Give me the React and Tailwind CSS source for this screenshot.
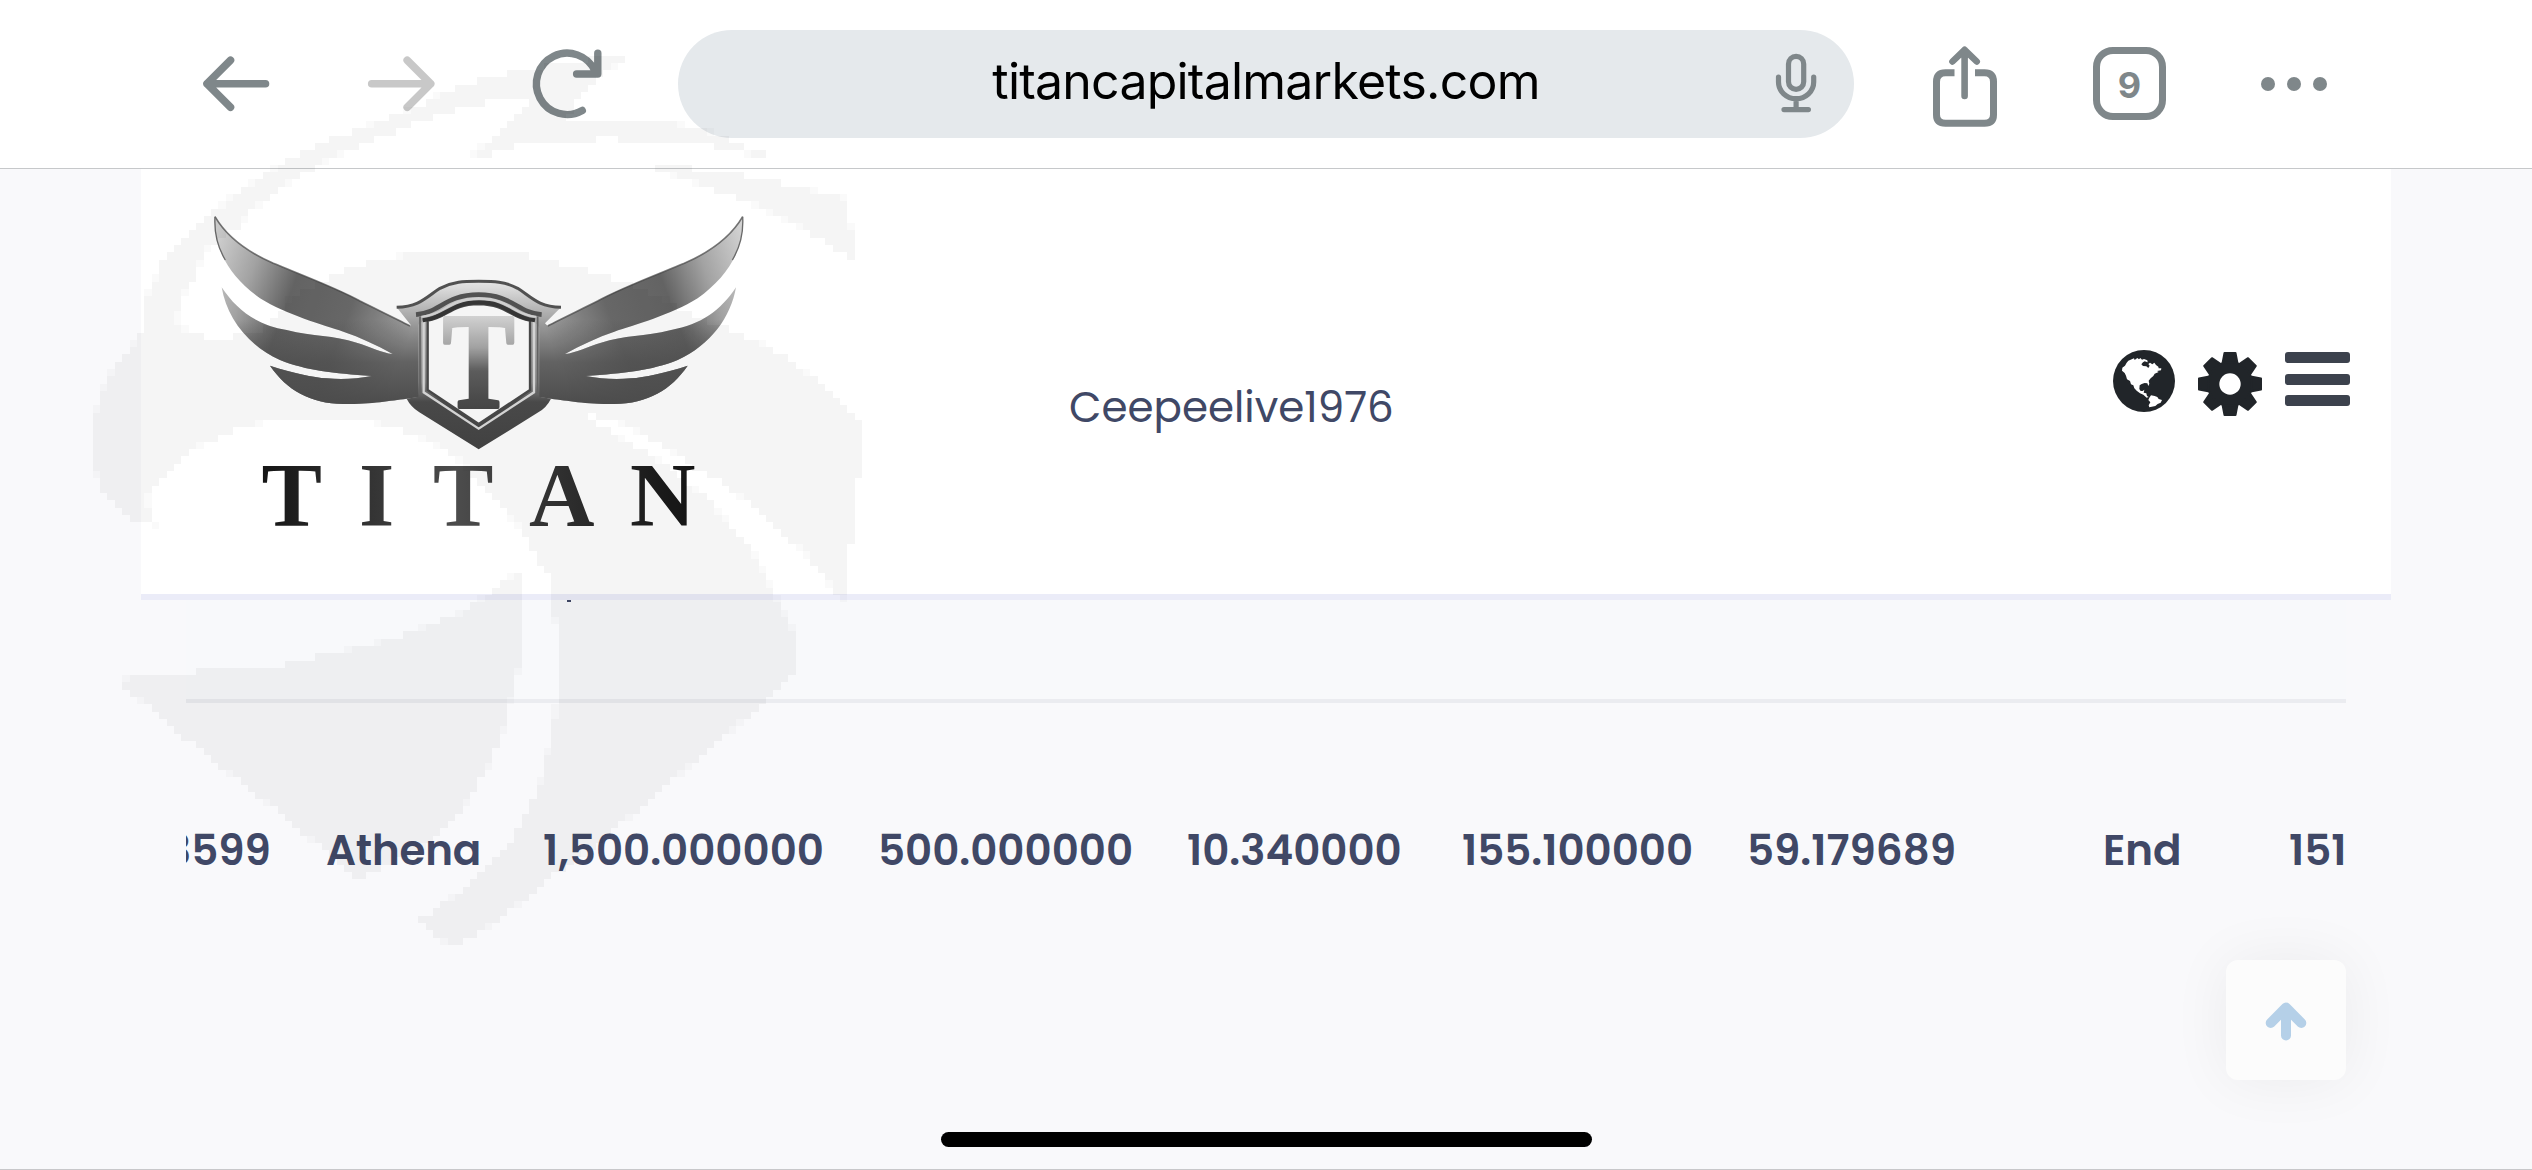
import React from 'react';

/* block grid of the watermark */
const CELL_W = 7.4;
const CELL_H = 7.29;
const START_X = 3.8;
const START_Y = 4.5;

/* WATERMARK SHAPES, points as [x, y] pairs on a 1568 x 1568 grid */
const WATERMARK = [
  [
    [1052, 42], [960, 50], [850, 68], [780, 82], [700, 102], [640, 130], [560, 158], [480, 184], [400, 216], [350, 245],
    [290, 280], [250, 310], [200, 350], [160, 385], [140, 425], [120, 465], [118, 512], [90, 540], [60, 575], [40, 615],
    [22, 660], [22, 725], [35, 765], [65, 800], [110, 832], [145, 836], [132, 810], [132, 785], [170, 745], [220, 705],
    [280, 680], [350, 662], [420, 656], [530, 656], [600, 670], [660, 690], [720, 720], [755, 755], [800, 800], [855, 855],
    [870, 890], [900, 925], [905, 980], [915, 1020], [915, 1100], [905, 1170], [890, 1230], [870, 1290], [830, 1360], [790, 1400],
    [740, 1440], [690, 1478], [650, 1500], [670, 1522], [710, 1545], [770, 1518], [830, 1480], [900, 1430], [970, 1385], [1060, 1320],
    [1160, 1245], [1300, 1140], [1374, 1075], [1372, 1035], [1350, 985], [1325, 945], [1290, 885], [1250, 840], [1200, 790], [1130, 740],
    [1080, 710], [1010, 675], [960, 646], [1040, 665], [1110, 698], [1175, 740], [1225, 760], [1300, 815], [1390, 885], [1450, 955],
    [1460, 966], [1473, 870], [1486, 845], [1486, 760], [1498, 735], [1498, 660], [1450, 625], [1400, 585], [1340, 545], [1280, 518],
    [1210, 495], [1120, 455], [1040, 425], [990, 410], [930, 395], [850, 380], [740, 373], [640, 377], [560, 388], [480, 415],
    [400, 455], [340, 510], [260, 521], [205, 508], [187, 490], [190, 460], [210, 430], [225, 405], [245, 365], [300, 335],
    [330, 302], [400, 258], [460, 225], [530, 197], [620, 165], [720, 135], [790, 118], [860, 110], [850, 130], [810, 165],
    [775, 190], [750, 210], [790, 210], [860, 187], [1010, 184], [1150, 187], [1210, 197], [1280, 210], [1320, 210], [1250, 190],
    [1190, 165], [1110, 155], [1040, 148], [930, 150], [950, 120], [1000, 75]
  ],
  [
    [1068, 226], [1120, 229], [1210, 238], [1300, 250], [1380, 268], [1450, 275], [1472, 290], [1472, 330], [1486, 345], [1486, 386],
    [1460, 380], [1420, 355], [1360, 325], [1290, 295], [1220, 272], [1150, 250]
  ],
  [
    [835, 915], [846, 930], [846, 1060], [830, 1110], [810, 1180], [785, 1235], [750, 1290], [700, 1345], [640, 1385], [560, 1420],
    [530, 1434], [500, 1410], [450, 1370], [380, 1320], [300, 1265], [240, 1220], [180, 1180], [130, 1140], [76, 1102], [95, 1090],
    [270, 1078], [380, 1072], [460, 1055], [560, 1035], [640, 1013], [720, 985], [780, 950]
  ]
];

const block = (from, to, row) => {
  const x1 = (START_X + from * CELL_W).toFixed(1);
  const x2 = (START_X + to * CELL_W).toFixed(1);
  const y1 = Math.round(START_Y + row * CELL_H);
  const y2 = Math.round(START_Y + (row + 1) * CELL_H);
  return `M${x1} ${y1}H${x2}V${y2}H${x1}z`;
};

/* turns a shape into runs of full blocks, with lighter blocks on the edges */
const toBlocks = (points) => {
  const px = points.map(([x, y]) => [80 + x / 1.912, 30 + y / 1.686]);
  let full = '';
  let edge = '';
  for (let row = 0; row < 140; row++) {
    const y = START_Y + (row + 0.5) * CELL_H;
    const hits = [];
    px.forEach(([x1, y1], i) => {
      const [x2, y2] = px[(i + 1) % px.length];
      if (y1 > y !== y2 > y) hits.push(x1 + ((y - y1) * (x2 - x1)) / (y2 - y1));
    });
    hits.sort((a, b) => a - b);
    for (let i = 0; i + 1 < hits.length; i += 2) {
      const left = (hits[i] - START_X) / CELL_W;
      const right = (hits[i + 1] - START_X) / CELL_W;
      const from = Math.ceil(left - 0.35);
      const to = Math.floor(right + 0.35);
      if (to > from) full += block(from, to, row);
      if (from - left > 0.4) edge += block(from - 1, from, row);
      if (right - to > 0.4 && to >= from) edge += block(to, to + 1, row);
    }
  }
  return { full, edge };
};

const BLOCKS = WATERMARK.map(toBlocks);

const Watermark = () => (
  <svg
    className="absolute left-0 top-0 pointer-events-none"
    width="900"
    height="1000"
    viewBox="0 0 900 1000"
    shapeRendering="crispEdges"
  >
    <path d={BLOCKS.map((b) => b.full).join('')} fill="#000" fillOpacity="0.04" />
    <path d={BLOCKS.map((b) => b.edge).join('')} fill="#000" fillOpacity="0.02" />
  </svg>
);

const Toolbar = () => (
  <div className="h-[169px] shrink-0 bg-white border-b border-[#c6c8ca] flex items-start">
    <svg className="ml-[200px] mt-[44px]" width="70" height="80" viewBox="200 44 70 80" fill="none" stroke="#7f878a" strokeWidth="7.6" strokeLinecap="round" strokeLinejoin="round">
      <path d="M230.5 60.3 207 83.7l23.5 23.5M207 83.7h58.5" />
    </svg>
    <svg className="ml-[96px] mt-[44px]" width="74" height="80" viewBox="366 44 74 80" fill="none" stroke="#c8c8c8" strokeWidth="7.6" strokeLinecap="round" strokeLinejoin="round">
      <path d="M407.2 60.3 430.7 83.7l-23.5 23.5M430.7 83.7h-59" />
    </svg>
    <svg className="ml-[88px] mt-[44px]" width="80" height="80" viewBox="528 44 80 80" fill="none" stroke="#7f878a" strokeWidth="7.4" strokeLinecap="round" strokeLinejoin="round">
      <path d="M582.3 110.5A30.7 30.7 0 1 1 595 71M597.8 53.3V74h-21.2" />
    </svg>

    <div className="ml-[70px] mt-[30px] w-[1176px] h-[108px] rounded-full bg-[#e5e9ec] relative flex items-center justify-center">
      <span className="font-['Inter'] text-[50px] leading-[60px] tracking-[-0.78px] text-black whitespace-nowrap relative -top-[3px]">
        titancapitalmarkets.com
      </span>
      <svg className="absolute right-[36px] top-[20px]" width="44" height="66" viewBox="1774 50 44 66" fill="none" stroke="#7f878a" strokeWidth="5.2" strokeLinecap="round">
        <rect x="1788.5" y="56.3" width="15.2" height="33" rx="7.6" />
        <path d="M1778.5 77v5a17.6 16.7 0 0 0 35.2 0v-5M1796.1 99v10M1784 109.6h24.4" />
      </svg>
    </div>

    <svg className="ml-[74px] mt-[40px]" width="74" height="92" viewBox="1928 40 74 92" fill="none" stroke="#7f878a" strokeWidth="7" strokeLinecap="round" strokeLinejoin="round">
      <path strokeLinecap="butt" d="M1954.5 72.8h-9q-9 0-9 9v33q0 8.500 9 8.500h39q9 0 9-8.500v-33q0-9-9-9h-9.500" />
      <path strokeWidth="6.6" d="M1964.6 50v46M1952.5 61.5l12.1-11.7 12.1 11.7" />
    </svg>

    <div className="ml-[91px] mt-[47px] w-[73px] h-[73px] rounded-[20px] border-[7px] border-[#7f878a] flex items-center justify-center font-['Inter'] text-[36px] leading-none font-bold text-[#7f878a]">
      <span className="relative top-[1px]">9</span>
    </div>

    <div className="ml-[95px] mt-[77px] flex gap-[12px]">
      <div className="size-[14px] rounded-full bg-[#7f878a]" />
      <div className="size-[14px] rounded-full bg-[#7f878a]" />
      <div className="size-[14px] rounded-full bg-[#7f878a]" />
    </div>
  </div>
);

const WING =
  'M45 48C80 110 140 155 220 190C330 235 410 265 480 303C540 333 590 357 630 378L662 345V590L620 596C570 602 520 612 430 612C330 610 260 570 210 497C280 520 340 532 380 535C430 540 470 536 515 528C400 520 320 512 240 480C140 435 80 350 65 262C110 330 170 375 260 390C340 410 400 405 470 428C510 440 545 458 578 462C530 435 480 412 430 395C370 375 260 345 180 295C90 230 40 150 45 48Z';

const Logo = () => (
  <svg width="560" height="340" viewBox="0 0 1680 1020">
    <defs>
      <linearGradient id="wing" gradientUnits="userSpaceOnUse" x1="45" y1="100" x2="660" y2="330">
        <stop offset="0" stopColor="#d2d2d2" />
        <stop offset="0.22" stopColor="#a2a2a2" />
        <stop offset="0.42" stopColor="#636363" />
        <stop offset="0.7" stopColor="#6c6c6c" />
        <stop offset="1" stopColor="#a8a8a8" />
      </linearGradient>
      <linearGradient id="wingShade" x1="0" y1="0" x2="0" y2="1">
        <stop offset="0.55" stopColor="#505050" stopOpacity="0" />
        <stop offset="0.78" stopColor="#505050" stopOpacity="0.75" />
        <stop offset="1" stopColor="#505050" />
      </linearGradient>
      <linearGradient id="letter" gradientUnits="userSpaceOnUse" x1="0" y1="345" x2="0" y2="625">
        <stop offset="0" stopColor="#dcdcdc" />
        <stop offset="0.35" stopColor="#a8a8a8" />
        <stop offset="0.6" stopColor="#606060" />
        <stop offset="1" stopColor="#484848" />
      </linearGradient>
      <linearGradient id="crest" x1="0" y1="0" x2="0" y2="1">
        <stop offset="0" stopColor="#f0f0f0" />
        <stop offset="1" stopColor="#9a9a9a" />
      </linearGradient>
      <linearGradient id="side" x1="0" y1="0" x2="0" y2="1">
        <stop offset="0" stopColor="#b8b8b8" />
        <stop offset="0.5" stopColor="#8c8c8c" />
        <stop offset="0.65" stopColor="#4c4c4c" />
        <stop offset="1" stopColor="#444" />
      </linearGradient>
      <linearGradient id="word" x1="0" y1="0" x2="1" y2="0">
        <stop offset="0" stopColor="#151515" />
        <stop offset="0.45" stopColor="#4c4c4c" />
        <stop offset="0.7" stopColor="#303030" />
        <stop offset="1" stopColor="#151515" />
      </linearGradient>
      <g id="halfWing">
        <path d={WING} fill="url(#wing)" />
        <path d={WING} fill="url(#wingShade)" />
        <path d="M45 50C80 110 140 155 220 190C330 235 410 265 480 303C540 333 590 357 630 378" fill="none" stroke="#444" strokeOpacity="0.7" strokeWidth="5" />
        <path d="M45 50C42 100 52 140 76 180" fill="none" stroke="#6a6a6a" strokeWidth="4" />
      </g>
    </defs>

    <use href="#halfWing" />
    <use href="#halfWing" transform="matrix(-1 0 0 1 1673 0)" />

    {/* SHIELD */}
    <path d="M655 345H1018V590L1053 596Q1040 622 1015 637L836 748L658 637Q632 620 620 596L655 590Z" fill="url(#side)" />
    <path d="M590 322C660 320 680 290 720 265C760 244 790 244 836 244S913 244 953 265C993 290 1013 320 1083 322L1020 385L1000 360C940 350 930 318 890 316H783C743 318 733 350 673 360L640 385Z" fill="url(#crest)" />
    <path d="M648 344C720 338 735 284 836 284S953 338 1025 344" fill="none" stroke="#555" strokeWidth="14" />
    <path d="M590 322C660 320 680 290 720 265C760 244 790 244 836 244S913 244 953 265C993 290 1013 320 1083 322" fill="none" stroke="#555" strokeWidth="9" />
    <path d="M683 362C745 352 750 314 836 312C922 314 928 352 990 362V570L836 672L683 570Z" fill="#fff" stroke="#4a4a4a" strokeWidth="7" />
    <path d="M671 362V577L836 686L1002 577V362" fill="none" stroke="#dcdcdc" strokeWidth="7" />
    <path d="M660 350V585" stroke="#666" strokeWidth="5" />
    <path d="M1013 350V585" stroke="#666" strokeWidth="5" />
    <path d="M668 361C742 352 748 308 836 307S931 352 1005 361" fill="none" stroke="#383838" strokeWidth="12" />
    <path d="M664 350C736 344 744 297 836 296S937 344 1009 350" fill="none" stroke="#d8d8d8" strokeWidth="6" />
    <text x="729" y="620" fontFamily="Liberation Serif, serif" fontWeight="bold" fontSize="406" textLength="214" lengthAdjust="spacingAndGlyphs" fill="url(#letter)" stroke="url(#letter)" strokeWidth="12" strokeLinejoin="round">T</text>

    <text x="275 530 790 1085 1388" y="977" textAnchor="middle" fontFamily="Liberation Serif, serif" fontWeight="bold" fontSize="272" fill="url(#word)">TITAN</text>
  </svg>
);

const Globe = () => (
  <svg width="62" height="62" viewBox="15 13 186 186">
    <circle cx="108" cy="106" r="93" fill="#212529" />
    <path
      fill="#fff"
      d="M42 75L43 66 51 60 56 51 61 45 78 38 80 43 88 37 93 41 97 37 102 42 108 40 118 44 119 50 110 47 105 50 100 56 105 61 115 62 121 67 125 60 121 55 126 51 133 56 139 51 144 58 151 63 152 68 160 68 159 74 147 76 152 79 140 84 136 91 128 98 122 105 124 114 121 121 118 113 110 112 101 115 95 119 94 130 98 136 104 136 109 132 107 141 115 143 117 151 122 154 116 156 106 147 96 143 86 135 79 128 76 119 69 116 66 106 57 101 54 90 50 82ZM124 156L129 149 140 151 148 154 152 160 162 163 158 171 149 175 142 181 124 185 122 179 127 170 121 163Z"
    />
  </svg>
);

const Gear = () => (
  <svg width="66" height="66" viewBox="-33 -33 66 66">
    <g fill="#212529" stroke="#212529" strokeWidth="2" strokeLinejoin="round">
      {[0, 45, 90, 135, 180, 225, 270, 315].map((deg) => (
        <path key={deg} d="M-5.5-31H5.5L8-18H-8Z" transform={`rotate(${deg})`} />
      ))}
      <circle r="22" />
    </g>
    <circle r="10.7" fill="#fff" />
  </svg>
);

const Header = () => (
  <div className="mx-[141px] h-[431px] shrink-0 bg-white border-b-[6px] border-[#ebecf8] flex items-start">
    <div className="ml-[59px] mt-[31px]">
      <Logo />
    </div>
    <div className="ml-[309px] mt-[209px] w-[340px] font-['Poppins','Inter'] text-[42px] leading-[60px] text-[#404866] whitespace-nowrap">
      Ceepeelive1976
    </div>
    <div className="ml-auto mr-[41px] mt-[181px] flex items-start">
      <Globe />
      <div className="ml-[22px] mt-[1px]">
        <Gear />
      </div>
      <div className="ml-[22px] mt-[2px] w-[65px] flex flex-col gap-[10.5px]">
        <div className="h-[11px] rounded-[3px] bg-[#3c424d]" />
        <div className="h-[11px] rounded-[3px] bg-[#3c424d]" />
        <div className="h-[11px] rounded-[3px] bg-[#3c424d]" />
      </div>
    </div>
  </div>
);

const Table = () => (
  <div className="mx-[186px] flex-1 overflow-hidden">
    <div className="h-[103px] bg-[#f8f9fb] border-b-4 border-[#ebecf0]">
      <div className="ml-[381px] w-[4px] h-[2px] bg-[#404866]" />
    </div>
    <div className="mt-[118px] -ml-[20px] flex font-['Poppins','Inter'] font-semibold text-[42px] leading-[60px] text-[#404866] whitespace-nowrap">
      <div className="w-[160px] shrink-0">3599</div>
      <div className="w-[217px] shrink-0 tracking-[-0.2px]">Athena</div>
      <div className="w-[335px] shrink-0">1,500.000000</div>
      <div className="w-[309px] shrink-0">500.000000</div>
      <div className="w-[275px] shrink-0">10.340000</div>
      <div className="w-[285px] shrink-0">155.100000</div>
      <div className="w-[356px] shrink-0">59.179689</div>
      <div className="w-[186px] shrink-0">End</div>
      <div className="shrink-0">151</div>
    </div>
  </div>
);

const App = () => {
  return (
    <div className="relative w-[2532px] h-[1170px] overflow-hidden bg-[#f9f9fb] border-b border-[#c8c8ca] flex flex-col">
      <Toolbar />
      <Header />
      <Table />

      {/* SCROLL TO TOP */}
      <div className="absolute right-[186px] top-[960px] size-[120px] rounded-[12px] bg-[#fcfcfc] shadow-[0_0_60px_rgba(0,0,0,0.06)] flex items-center justify-center">
        <svg width="44" height="44" viewBox="-22 -22 44 44" fill="none" stroke="#b5d0e8" strokeWidth="10" strokeLinecap="round" strokeLinejoin="round">
          <path d="M-15.3 3 0-12.5 15.3 3M0-10V15.5" />
        </svg>
      </div>

      {/* HOME INDICATOR */}
      <div className="absolute left-[941px] top-[1132px] w-[651px] h-[15px] rounded-full bg-black" />

      <Watermark />
    </div>
  );
};

export default App;
